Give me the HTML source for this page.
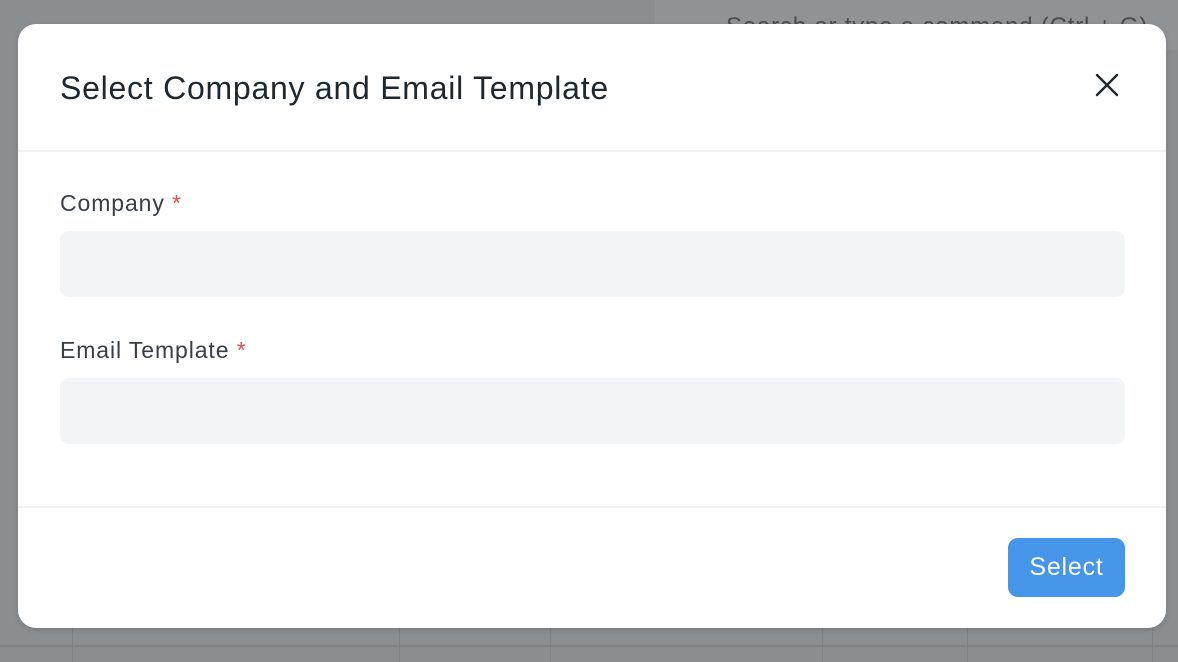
<!DOCTYPE html>
<html><head><style>
html,body{margin:0;padding:0;width:1178px;height:662px;overflow:hidden;background:#8b8e91;font-family:"Liberation Sans",sans-serif;position:relative}
.bg1{position:absolute;left:655px;top:0;width:523px;height:50px;background:#909396}
.bgtxt{position:absolute;left:726px;top:13px;font-size:24px;color:#4a4d50;letter-spacing:0.8px}
.line{position:absolute;background:#7f8285}
.modal{position:absolute;left:18px;top:24px;width:1148px;height:604px;background:#fff;border-radius:18px;box-shadow:0 2px 6px rgba(0,0,0,.15)}
.title{position:absolute;left:42px;top:46px;font-size:32px;color:#1f272e;letter-spacing:0.75px}
.close{position:absolute;left:1077px;top:49px}
.hr{position:absolute;left:0;width:1148px;height:2px;background:#f2f2f3}
.lbl{position:absolute;left:42px;font-size:23px;color:#383e45;letter-spacing:0.9px}
.lbl span{color:#e24c4c}
.inp{position:absolute;left:42px;width:1065px;height:66px;background:#f3f4f6;border-radius:9px}
.btn{position:absolute;left:990px;top:514px;width:117px;height:59px;background:#4595e8;border-radius:10px;color:#fff;font-size:25px;text-align:center;line-height:59px;letter-spacing:0.8px}
</style></head><body>
<div class="bg1"></div>
<div class="bgtxt">Search or type a command (Ctrl + G)</div>
<div class="line" style="left:0;top:645px;width:1178px;height:2px"></div>
<div class="line" style="left:72px;top:628px;width:1px;height:34px"></div>
<div class="line" style="left:399px;top:628px;width:1px;height:34px"></div>
<div class="line" style="left:550px;top:628px;width:1px;height:34px"></div>
<div class="line" style="left:822px;top:628px;width:1px;height:34px"></div>
<div class="line" style="left:967px;top:628px;width:1px;height:34px"></div>
<div class="line" style="left:1152px;top:628px;width:1px;height:34px"></div>
<div class="modal">
<div class="title">Select Company and Email Template</div>
<svg class="close" width="24" height="24" viewBox="0 0 24 24"><path d="M2 2L22 22M22 2L2 22" stroke="#1f272e" stroke-width="2.4" stroke-linecap="round"/></svg>
<div class="hr" style="top:126px"></div>
<div class="lbl" style="top:166px">Company <span>*</span></div>
<div class="inp" style="top:207px"></div>
<div class="lbl" style="top:313px">Email Template <span>*</span></div>
<div class="inp" style="top:354px"></div>
<div class="hr" style="top:482px"></div>
<div class="btn">Select</div>
</div>
</body></html>
